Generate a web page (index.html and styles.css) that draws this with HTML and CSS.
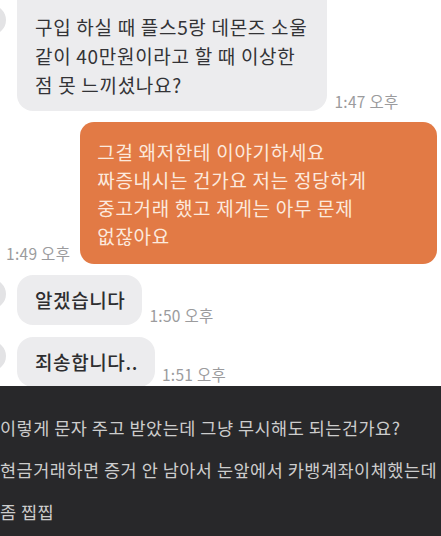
FILE: index.html
```html
<!DOCTYPE html>
<html>
<head>
    <title>문자 캡처</title>
    <link rel="stylesheet" href="styles.css">
</head>
<body>
    <div class="chat">
        <div class="row row-first">
            <div class="avatar avatar-first"></div>
            <div class="bubble bubble-first">구입 하실 때 플스5랑 데몬즈 소울<br>같이 40만원이라고 할 때 이상한<br>점 못 느끼셨나요?</div>
            <span class="time">1:47 오후</span>
        </div>

        <div class="row row-out">
            <span class="time">1:49 오후</span>
            <div class="bubble bubble-out">그걸 왜저한테 이야기하세요<br>짜증내시는 건가요 저는 정당하게<br>중고거래 했고 제게는 아무 문제<br>없잖아요</div>
        </div>

        <div class="row">
            <div class="avatar"></div>
            <div class="bubble bubble-short">알겠습니다</div>
            <span class="time">1:50 오후</span>
        </div>

        <div class="row row-last">
            <div class="avatar"></div>
            <div class="bubble bubble-short">죄송합니다..</div>
            <span class="time">1:51 오후</span>
        </div>
    </div>

    <div class="post">
        <p>이렇게 문자 주고 받았는데 그냥 무시해도 되는건가요?</p>
        <p>현금거래하면 증거 안 남아서 눈앞에서 카뱅계좌이체했는데</p>
        <p>좀 찝찝</p>
    </div>
</body>
</html>
```

FILE: styles.css
```css
body {
    margin: 0;
    padding: 0;
    width: 441px;
    background-color: #ffffff;
    font-family: 'Noto Sans CJK KR', 'Noto Sans', sans-serif;
}

.chat {
    height: 386px;
    overflow: hidden;
    background-color: #ffffff;
}

.row {
    display: flex;
    align-items: flex-end;
    gap: 7px;
    margin-top: 11px;
}

.row-first {
    margin-top: -20px;
}

.row-last {
    margin-top: 12px;
}

.avatar {
    align-self: flex-start;
    width: 30px;
    height: 30px;
    margin-top: 4px;
    margin-left: -24px;
    margin-right: 4px;
    border-radius: 50%;
    background-color: #e3e3e5;
    flex-shrink: 0;
}

.avatar-first {
    margin-top: 25px;
}

.bubble {
    font-size: 19px;
    line-height: 29px;
    letter-spacing: 0.7px;
    color: #333336;
    background-color: #ececee;
    border-radius: 16px;
    white-space: nowrap;
}

.bubble-first {
    padding: 32px 20px 12px 18px;
}

.bubble-short {
    padding: 10px 17px 11px 18px;
    font-weight: 500;
    letter-spacing: 0.6px;
    color: #2e2e30;
}

.row-out {
    gap: 10px;
    padding: 0 4px 0 6px;
}

.bubble-out {
    flex: 1;
    padding: 16px 17px 14px 17px;
    line-height: 28px;
    color: #fce9dd;
    background-color: #e27a45;
    border-radius: 14px;
}

.time {
    font-size: 15.5px;
    line-height: 18px;
    letter-spacing: 0.3px;
    color: #9b9b9d;
    margin-bottom: 1px;
    white-space: nowrap;
}

.row-out .time {
    margin-bottom: 2px;
}

.row-last .time {
    margin-bottom: 4px;
}

.post {
    height: 150px;
    padding-top: 21px;
    box-sizing: border-box;
    background-color: #28282a;
    overflow: hidden;
}

.post p {
    margin: 0;
    font-size: 17.5px;
    line-height: 42px;
    letter-spacing: 0.5px;
    color: #cdcdcd;
    white-space: nowrap;
}
```
